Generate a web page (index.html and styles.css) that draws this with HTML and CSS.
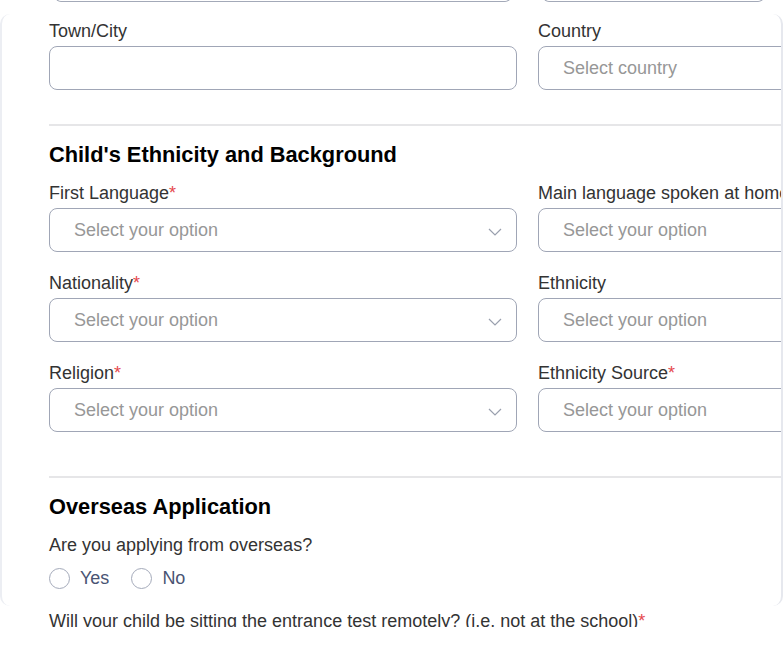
FILE: index.html
```html
<!DOCTYPE html>
<html lang="en">
<head>
<meta charset="utf-8">
<title>Application form</title>
<link rel="stylesheet" href="styles.css">
</head>
<body>
<div class="top-strip">
  <div class="stub stub-left"></div>
  <div class="stub stub-right"></div>
</div>
<div class="card">
  <div class="grid grid-first">
    <div class="field">
      <label class="label">Town/City</label>
      <div class="input"></div>
    </div>
    <div class="field">
      <label class="label">Country</label>
      <div class="input"><span class="placeholder">Select country</span></div>
    </div>
  </div>

  <hr class="sep sep-first">
  <h2 class="heading">Child's Ethnicity and Background</h2>

  <div class="grid">
    <div class="field">
      <label class="label">First Language<span class="req">*</span></label>
      <div class="input select"><span class="placeholder">Select your option</span>
        <svg class="chev" width="14" height="8" viewBox="0 0 14 8"><path d="M1 1 L7 7 L13 1" fill="none" stroke="#9aa0ae" stroke-width="1.2"/></svg>
      </div>
    </div>
    <div class="field">
      <label class="label">Main language spoken at home</label>
      <div class="input select"><span class="placeholder">Select your option</span>
        <svg class="chev" width="14" height="8" viewBox="0 0 14 8"><path d="M1 1 L7 7 L13 1" fill="none" stroke="#9aa0ae" stroke-width="1.2"/></svg>
      </div>
    </div>
    <div class="field">
      <label class="label">Nationality<span class="req">*</span></label>
      <div class="input select"><span class="placeholder">Select your option</span>
        <svg class="chev" width="14" height="8" viewBox="0 0 14 8"><path d="M1 1 L7 7 L13 1" fill="none" stroke="#9aa0ae" stroke-width="1.2"/></svg>
      </div>
    </div>
    <div class="field">
      <label class="label">Ethnicity</label>
      <div class="input select"><span class="placeholder">Select your option</span>
        <svg class="chev" width="14" height="8" viewBox="0 0 14 8"><path d="M1 1 L7 7 L13 1" fill="none" stroke="#9aa0ae" stroke-width="1.2"/></svg>
      </div>
    </div>
    <div class="field">
      <label class="label">Religion<span class="req">*</span></label>
      <div class="input select"><span class="placeholder">Select your option</span>
        <svg class="chev" width="14" height="8" viewBox="0 0 14 8"><path d="M1 1 L7 7 L13 1" fill="none" stroke="#9aa0ae" stroke-width="1.2"/></svg>
      </div>
    </div>
    <div class="field">
      <label class="label">Ethnicity Source<span class="req">*</span></label>
      <div class="input select"><span class="placeholder">Select your option</span>
        <svg class="chev" width="14" height="8" viewBox="0 0 14 8"><path d="M1 1 L7 7 L13 1" fill="none" stroke="#9aa0ae" stroke-width="1.2"/></svg>
      </div>
    </div>
  </div>

  <hr class="sep sep-second">
  <h2 class="heading heading-second">Overseas Application</h2>
  <p class="label question">Are you applying from overseas?</p>
  <div class="radios">
    <label class="radio"><span class="circle"></span><span class="radio-text">Yes</span></label>
    <label class="radio"><span class="circle"></span><span class="radio-text">No</span></label>
  </div>
</div>
<div class="clip">
  <p class="label clip-text">Will your child be sitting the entrance test remotely? (i.e. not at the school)<span class="req">*</span></p>
</div>
</body>
</html>
```
FILE: styles.css
```css
html, body {
  margin: 0;
  padding: 0;
  background: #ffffff;
  overflow: hidden;
  width: 784px;
  height: 648px;
  font-family: "Liberation Sans", Arial, sans-serif;
}

.top-strip {
  height: 14px;
  display: flex;
  padding-left: 55px;
  gap: 32px;
  overflow: hidden;
}

.stub {
  height: 6px;
  margin-top: -5px;
  border: 1px solid #a3a9b8;
  border-top: 0;
  border-radius: 0 0 6px 6px;
}

.stub-left { width: 454px; }
.stub-right { width: 219px; }

.card {
  width: 783px;
  box-sizing: border-box;
  border-left: 2px solid #eceef3;
  border-right: 2px solid #e6e8ee;
  border-radius: 10px;
  padding: 5px 0 17px 47px;
  overflow: hidden;
}

.grid {
  display: grid;
  grid-template-columns: 468px 468px;
  column-gap: 21px;
  row-gap: 19px;
}

.field {
  display: flex;
  flex-direction: column;
}

.label {
  display: block;
  margin: 0;
  font-size: 18px;
  line-height: 22px;
  color: #333333;
  white-space: nowrap;
}

.req {
  color: #e5484d;
}

.field .label {
  line-height: 24px;
  margin-bottom: 3px;
}

.input {
  position: relative;
  height: 44px;
  box-sizing: border-box;
  border: 1px solid #a0a6b6;
  border-radius: 8px;
  display: flex;
  align-items: center;
  padding-left: 24px;
  background: #ffffff;
}

.placeholder {
  font-size: 18px;
  color: #979797;
  white-space: nowrap;
}

.chev {
  position: absolute;
  right: 14px;
  top: 19px;
}

.sep {
  border: 0;
  height: 2px;
  background: #e6e6e8;
  margin: 0;
  margin-right: -10px;
}

.sep-first { margin-top: 34px; }
.sep-second { margin-top: 44px; }

.heading {
  margin: 16px 0 13px;
  font-size: 21.8px;
  line-height: 26px;
  font-weight: bold;
  color: #000000;
}

.heading-second {
  margin-top: 16px;
  margin-bottom: 14px;
}

.question {
  margin: 0;
}

.radios {
  display: flex;
  gap: 22px;
  margin-top: 11px;
  height: 22px;
  align-items: center;
}

.radio {
  display: flex;
  align-items: center;
  gap: 10px;
}

.circle {
  width: 21px;
  height: 21px;
  box-sizing: border-box;
  border: 1.5px solid #a4aaba;
  border-radius: 50%;
}

.radio-text {
  font-size: 18px;
  line-height: 22px;
  color: #4a5473;
}

.clip {
  height: 21px;
  overflow: hidden;
  padding-left: 49px;
}

.clip-text {
  margin: 0;
  padding-top: 4px;
}
```
